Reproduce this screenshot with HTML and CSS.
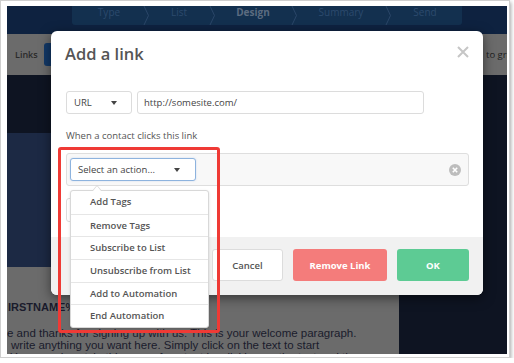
FILE: index.html
```html
<!DOCTYPE html>
<html>
<head>
<meta charset="utf-8">
<link rel="stylesheet" href="styles.css">
</head>
<body>
<div class="frame">
  <div class="shot">
    <div class="nav">
      <div class="steps">
        <div class="step s1">Type<svg class="chev" width="7" height="19" viewBox="0 0 7 19"><polyline points="1,0 5.5,9.5 1,19" fill="none" stroke="#2a4769" stroke-width="1"/></svg></div>
        <div class="step s2">List<svg class="chev" width="7" height="19" viewBox="0 0 7 19"><polyline points="1,0 5.5,9.5 1,19" fill="none" stroke="#2a4769" stroke-width="1"/></svg></div>
        <div class="step s3">Design<svg class="chev" width="7" height="19" viewBox="0 0 7 19"><polyline points="1,0 5.5,9.5 1,19" fill="none" stroke="#2a4769" stroke-width="1"/></svg></div>
        <div class="step s4">Summary<svg class="chev" width="7" height="19" viewBox="0 0 7 19"><polyline points="1,0 5.5,9.5 1,19" fill="none" stroke="#2a4769" stroke-width="1"/></svg></div>
        <div class="step s5">Send</div>
      </div>
    </div>
    <div class="toolbar">
      <span class="tb-label">Links</span>
      <span class="tb-btn"></span>
      <span class="tb-right">to grid</span>
    </div>
    <div class="main">
      <div class="canvas">
        <div class="email-head"></div>
        <div class="email-body">
          <div class="hello">IRSTNAME%,</div>
          <div class="para">
            <div class="line l1">e and thanks for signing up with us. This is your welcome paragraph.</div>
            <div class="line l2">write anything you want here. Simply click on the text to start</div>
            <div class="line l3">You can also style this area of content by clicking on the text and then</div>
          </div>
        </div>
      </div>
      <div class="sidebar"></div>
    </div>

    <div class="modal">
      <div class="m-head">
        <div class="m-title">Add a link</div>
        <svg class="m-close" width="12" height="12" viewBox="0 0 12 12"><path d="M1 1 L11 11 M11 1 L1 11" stroke="#c6c6c6" stroke-width="2" fill="none"/></svg>
      </div>
      <div class="m-body">
        <div class="url-row">
          <div class="sel sel-url"><span>URL</span><span class="caret"></span></div>
          <div class="inp">http://somesite.com/</div>
        </div>
        <div class="label">When a contact clicks this link</div>
        <div class="action">
          <div class="sel sel-action"><span>Select an action...</span><span class="caret"></span></div>
          <svg class="clear" width="12" height="12" viewBox="0 0 12 12"><circle cx="6" cy="6" r="6" fill="#bdbdbd"/><path d="M3.8 3.8 L8.2 8.2 M8.2 3.8 L3.8 8.2" stroke="#fff" stroke-width="1.6"/></svg>
        </div>
        <div class="hidden-field"></div>
      </div>
      <div class="m-foot">
        <div class="btn cancel">Cancel</div>
        <div class="btn remove">Remove Link</div>
        <div class="btn ok">OK</div>
      </div>
      <div class="dropdown">
        <div class="item">Add Tags</div>
        <div class="item">Remove Tags</div>
        <div class="item">Subscribe to List</div>
        <div class="item">Unsubscribe from List</div>
        <div class="item">Add to Automation</div>
        <div class="item">End Automation</div>
      </div>
    </div>
    <div class="highlight"></div>
  </div>
</div>
</body>
</html>
```

FILE: styles.css
```css
* { box-sizing: border-box; margin: 0; padding: 0; }
body { background: #fff; font-family: "Open Sans", sans-serif; }

.frame {
  width: 510px; height: 358px;
  border: 1px solid #cfcfcf;
  box-shadow: 1px 2px 4px rgba(0,0,0,.35);
  padding: 5px 2px 3px 6px;
  background: #fff;
}
.shot {
  position: relative;
  width: 500px; height: 348px;
  overflow: hidden;
  background: #0e1422;
  display: flex; flex-direction: column;
}

/* top nav */
.nav { height: 28px; flex: none; background: #0e2240; padding-left: 65px; }
.steps { display: flex; width: 390px; height: 19px; background: #13304f; border-radius: 0 0 3px 3px; }
.step { position: relative; font-size: 10px; line-height: 12px; padding-top: 0; color: #2c4a6d; text-align: center; }
.chev { position: absolute; right: -4px; top: 0; }
.s1 { width: 74px; }
.s2 { width: 66px; }
.s3 { width: 82px; font-weight: 700; color: #5b6b80; }
.s4 { width: 94px; }
.s5 { width: 74px; }

/* toolbar */
.toolbar { height: 41px; flex: none; background: #6b6b6b; display: flex; align-items: center; padding-left: 8px; }
.tb-label { font-size: 9px; font-weight: 600; color: #2a2a2a; }
.tb-btn { width: 24px; height: 23px; background: #123867; border-radius: 3px; margin-left: 6px; }
.tb-right { margin-left: auto; width: 21px; overflow: hidden; white-space: nowrap; font-size: 9.5px; color: #1e1e1e; }

/* canvas */
.main { flex: 1; display: flex; }
.canvas { width: 392px; padding-top: 58px; }
.email-head { height: 134px; background: #1c2944; }
.email-body {
  height: 87px; overflow: hidden; background: #6b6b6b;
  padding-top: 33px;
  font-family: "Liberation Sans", Arial, sans-serif; color: #1a1b2c;
}
.hello { font-size: 11px; font-weight: 700; line-height: 14px; padding-left: 1px; }
.para { margin-top: 13px; font-size: 11.5px; line-height: 12px; white-space: nowrap; }
.l2 { padding-left: 4px; }
.l3 { padding-left: 3px; }
.sidebar { flex: 1; }

/* modal */
.modal {
  position: absolute; left: 44px; top: 25px;
  width: 432px; height: 264px;
  background: #fff; border-radius: 6px;
  box-shadow: 0 3px 12px rgba(0,0,0,.5);
  display: flex; flex-direction: column;
  color: #555;
}
.m-head { display: flex; justify-content: space-between; align-items: flex-start; height: 34px; padding: 12px 14px 0 14px; }
.m-title { font-size: 16.5px; font-weight: 600; line-height: 22px; color: #555; }
.m-close { margin-top: 3px; }
.m-body { flex: 1; padding: 26px 14px 0 15px; }

.url-row { display: flex; gap: 5px; height: 23px; }
.sel {
  display: flex; align-items: center; justify-content: space-between;
  border: 1px solid #dcdcdc; border-radius: 3px; background: #fff;
  font-size: 9.5px; color: #444;
}
.sel-url { width: 66px; padding: 0 14px 0 7px; }
.caret { width: 0; height: 0; border-left: 3.5px solid transparent; border-right: 3.5px solid transparent; border-top: 4px solid #444; }
.inp {
  width: 287px; height: 23px; border: 1px solid #dcdcdc; border-radius: 3px;
  font-size: 9.5px; color: #444; line-height: 21px; padding-left: 6px;
}
.label { margin-top: 16px; font-size: 9.5px; line-height: 12px; color: #555; }
.action {
  margin-top: 11px; width: 403px; height: 33px;
  border: 1px solid #dedede; border-radius: 3px; background: #f8f8f8;
  display: flex; align-items: center; padding: 0 7px 0 3px;
}
.sel-action { width: 126px; height: 23px; border-color: #8db3de; padding: 0 15px 0 7px; box-shadow: 0 0 2px rgba(120,160,220,.35); }
.clear { margin-left: auto; }
.hidden-field { margin-top: 12px; width: 140px; height: 24px; border: 1px solid #dcdcdc; border-radius: 3px; }

.m-foot {
  height: 58px; background: #f1f1f1; border-radius: 0 0 6px 6px;
  display: flex; justify-content: flex-end; align-items: flex-start;
  gap: 10px; padding: 12px 14px 0 0;
}
.btn {
  height: 32px; border-radius: 3px;
  display: flex; align-items: center; justify-content: center;
  font-size: 9.5px; font-weight: 700; color: #fff;
}
.cancel { width: 71px; background: #fff; border: 1px solid #dcdcdc; color: #555; font-weight: 600; }
.remove { width: 94px; background: #f47c7b; }
.ok { width: 72px; background: #5dcb94; }

/* dropdown */
.dropdown {
  position: absolute; left: 19px; top: 159px; width: 139px;
  background: #fff; border: 1px solid #d8d8d8; border-radius: 3px;
  box-shadow: 0 1px 3px rgba(0,0,0,.12);
}
.dropdown::before {
  content: ""; position: absolute; left: 21px; top: -6px;
  border-left: 5px solid transparent; border-right: 5px solid transparent; border-bottom: 6px solid #d8d8d8;
}
.dropdown::after {
  content: ""; position: absolute; left: 22px; top: -5px;
  border-left: 4px solid transparent; border-right: 4px solid transparent; border-bottom: 5px solid #fff;
}
.item { height: 22.7px; line-height: 22px; padding-left: 19px; font-size: 9.5px; font-weight: 600; color: #555; border-top: 1px solid #e6e6e6; }
.item:first-child { border-top: none; }

.highlight {
  position: absolute; left: 51px; top: 141px; width: 162px; height: 186px;
  border: 3px solid #ef3a35; border-radius: 3px;
}
```
